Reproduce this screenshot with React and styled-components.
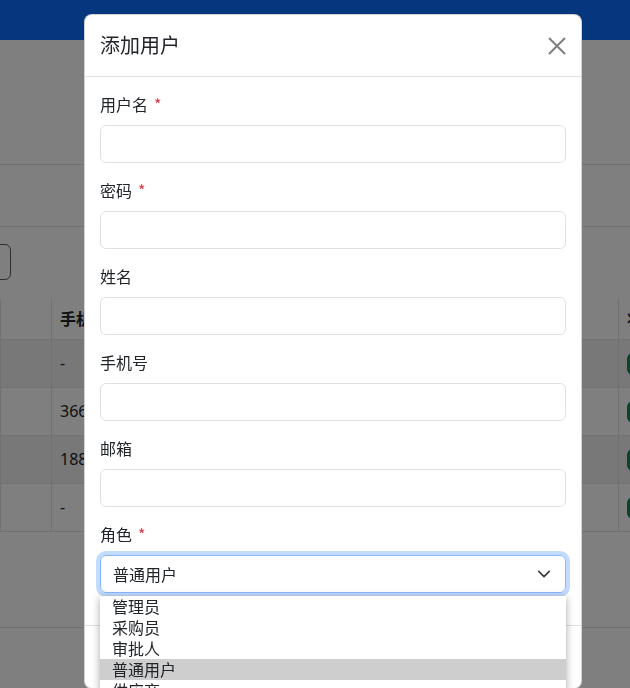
import styled, { createGlobalStyle } from "styled-components";

const GlobalStyle = createGlobalStyle`
  html, body {
    margin: 0;
    padding: 0;
    height: 100%;
    overflow: hidden;
  }
  body {
    font-family: "Noto Sans", "Noto Sans CJK SC", sans-serif;
    font-size: 16px;
    line-height: 1.5;
    color: #212529;
    background: #fff;
  }
  * {
    box-sizing: border-box;
  }
`;

const users = [
  { phone: "-", active: true },
  { phone: "366", active: true },
  { phone: "188", active: true },
  { phone: "-", active: true },
];

const roles = ["管理员", "采购员", "审批人", "普通用户", "供应商"];

const fields = [
  { label: "用户名", required: true },
  { label: "密码", required: true, type: "password" },
  { label: "姓名" },
  { label: "手机号" },
  { label: "邮箱" },
];

const App = () => {
  return (
    <>
      <GlobalStyle />
      <Page>
        <Navbar />
        <PageHeader />
        <FilterBar />
        <Toolbar>
          <OutlineButton />
        </Toolbar>
        <UserTable>
          <thead>
            <tr>
              <Th $width={51} />
              <Th $width={567}>手机号</Th>
              <Th>状态</Th>
            </tr>
          </thead>
          <tbody>
            {users.map((u, i) => (
              <Tr key={i} $striped={i % 2 === 0}>
                <Td />
                <Td>{u.phone}</Td>
                <Td>
                  <Badge />
                </Td>
              </Tr>
            ))}
          </tbody>
        </UserTable>
        <Footer />
      </Page>

      <Backdrop />

      <Modal>
        <ModalHeader>
          <ModalTitle>添加用户</ModalTitle>
          <CloseButton aria-label="关闭">
            <svg width="18" height="18" viewBox="0 0 18 18">
              <path
                d="M1 1 17 17 M17 1 1 17"
                stroke="#000"
                strokeWidth="2"
                fill="none"
              />
            </svg>
          </CloseButton>
        </ModalHeader>

        <ModalBody>
          {fields.map((f) => (
            <FormGroup key={f.label}>
              <Label>
                {f.label}
                {f.required && <Required>*</Required>}
              </Label>
              <Input type={f.type || "text"} />
            </FormGroup>
          ))}

          <FormGroup>
            <Label>
              角色<Required>*</Required>
            </Label>
            <SelectWrap>
              <SelectBox>
                <span>普通用户</span>
                <svg width="14" height="14" viewBox="0 0 16 16">
                  <path
                    d="m2 5 6 6 6-6"
                    stroke="#343a40"
                    strokeWidth="1.8"
                    strokeLinecap="round"
                    strokeLinejoin="round"
                    fill="none"
                  />
                </svg>
              </SelectBox>
              <OptionList>
                {roles.map((r) => (
                  <Option key={r} $selected={r === "普通用户"}>
                    {r}
                  </Option>
                ))}
              </OptionList>
            </SelectWrap>
          </FormGroup>
        </ModalBody>

        <ModalFooter>
          <FooterButton $variant="secondary">取消</FooterButton>
          <FooterButton $variant="primary">保存</FooterButton>
        </ModalFooter>
      </Modal>
    </>
  );
};

const Page = styled.div`
  width: 630px;
  height: 688px;
  display: flex;
  flex-direction: column;
  overflow: hidden;
`;

const Navbar = styled.div`
  height: 40px;
  flex-shrink: 0;
  background: #0d6efd;
`;

const PageHeader = styled.div`
  height: 125px;
  flex-shrink: 0;
  border-bottom: 1px solid #dee2e6;
`;

const FilterBar = styled.div`
  height: 62px;
  flex-shrink: 0;
  border-bottom: 1px solid #dee2e6;
`;

const Toolbar = styled.div`
  display: flex;
  padding: 17px 0 19px;
`;

const OutlineButton = styled.div`
  margin-left: -70px;
  width: 81px;
  height: 36px;
  border: 1px solid #5a6268;
  border-radius: 6px;
`;

const UserTable = styled.table`
  border-collapse: collapse;
  width: 700px;
  table-layout: fixed;
`;

const Th = styled.th`
  width: ${(p) => (p.$width ? `${p.$width}px` : "auto")};
  height: 40px;
  padding: 0 8px;
  text-align: left;
  font-weight: 700;
  white-space: nowrap;
  overflow: hidden;
  border: 1px solid #dee2e6;
  border-top: none;
`;

const Tr = styled.tr`
  background: ${(p) => (p.$striped ? "rgba(0, 0, 0, 0.06)" : "transparent")};
`;

const Td = styled.td`
  height: 48px;
  padding: 0 8px;
  white-space: nowrap;
  overflow: hidden;
  border: 1px solid #dee2e6;
`;

const Badge = styled.span`
  display: inline-block;
  width: 40px;
  height: 22px;
  vertical-align: middle;
  border-radius: 6px;
  background: #198754;
`;

const Footer = styled.div`
  margin-top: 95px;
  border-top: 1px solid #dee2e6;
  flex: 1;
`;

const Backdrop = styled.div`
  position: fixed;
  inset: 0;
  background: rgba(0, 0, 0, 0.5);
`;

const Modal = styled.div`
  position: fixed;
  top: 14px;
  left: 84px;
  width: 498px;
  background: #fff;
  border: 1px solid rgba(0, 0, 0, 0.175);
  border-radius: 8px;
  font-family: "Noto Sans CJK SC", "Noto Sans", sans-serif;
`;

const ModalHeader = styled.div`
  display: flex;
  align-items: center;
  justify-content: space-between;
  height: 62px;
  padding: 0 15px;
  border-bottom: 1px solid #dee2e6;
`;

const ModalTitle = styled.h5`
  margin: -2px 0 0;
  font-size: 20px;
  font-weight: 400;
  line-height: 30px;
`;

const CloseButton = styled.button`
  width: 30px;
  height: 30px;
  padding: 0;
  margin-right: -6px;
  border: none;
  background: transparent;
  opacity: 0.5;
  display: flex;
  align-items: center;
  justify-content: center;
`;

const ModalBody = styled.div`
  padding: 16px 15px;
`;

const FormGroup = styled.div`
  margin-bottom: 16px;
`;

const Label = styled.label`
  display: block;
  margin-bottom: 8px;
  padding-bottom: 2px;
  line-height: 22px;
`;

const Required = styled.span`
  color: #dc3545;
  margin-left: 6px;
`;

const Input = styled.input`
  display: block;
  width: 100%;
  height: 38px;
  padding: 6px 12px;
  border: 1px solid #dee2e6;
  border-radius: 6px;
  font: inherit;
  outline: none;
`;

const SelectWrap = styled.div`
  position: relative;
`;

const SelectBox = styled.div`
  display: flex;
  align-items: center;
  justify-content: space-between;
  height: 38px;
  padding: 0 14px 0 12px;
  border: 1px solid #86b7fe;
  border-radius: 6px;
  box-shadow: 0 0 0 4px rgba(13, 110, 253, 0.25);
  line-height: 24px;
`;

const OptionList = styled.ul`
  position: absolute;
  top: 41px;
  left: 0;
  right: 0;
  margin: 0;
  padding: 0;
  list-style: none;
  background: #fff;
  box-shadow: 0 2px 8px rgba(0, 0, 0, 0.35);
  z-index: 2;
`;

const Option = styled.li`
  height: 21px;
  line-height: 21px;
  padding: 0 12px;
  overflow: hidden;
  background: ${(p) => (p.$selected ? "#cecece" : "transparent")};
`;

const ModalFooter = styled.div`
  display: flex;
  justify-content: flex-end;
  gap: 8px;
  padding: 12px 15px;
  border-top: 1px solid #dee2e6;
`;

const FooterButton = styled.button`
  height: 38px;
  padding: 0 12px;
  border: none;
  border-radius: 6px;
  font: inherit;
  color: #fff;
  background: ${(p) => (p.$variant === "primary" ? "#0d6efd" : "#6c757d")};
`;

export default App;
